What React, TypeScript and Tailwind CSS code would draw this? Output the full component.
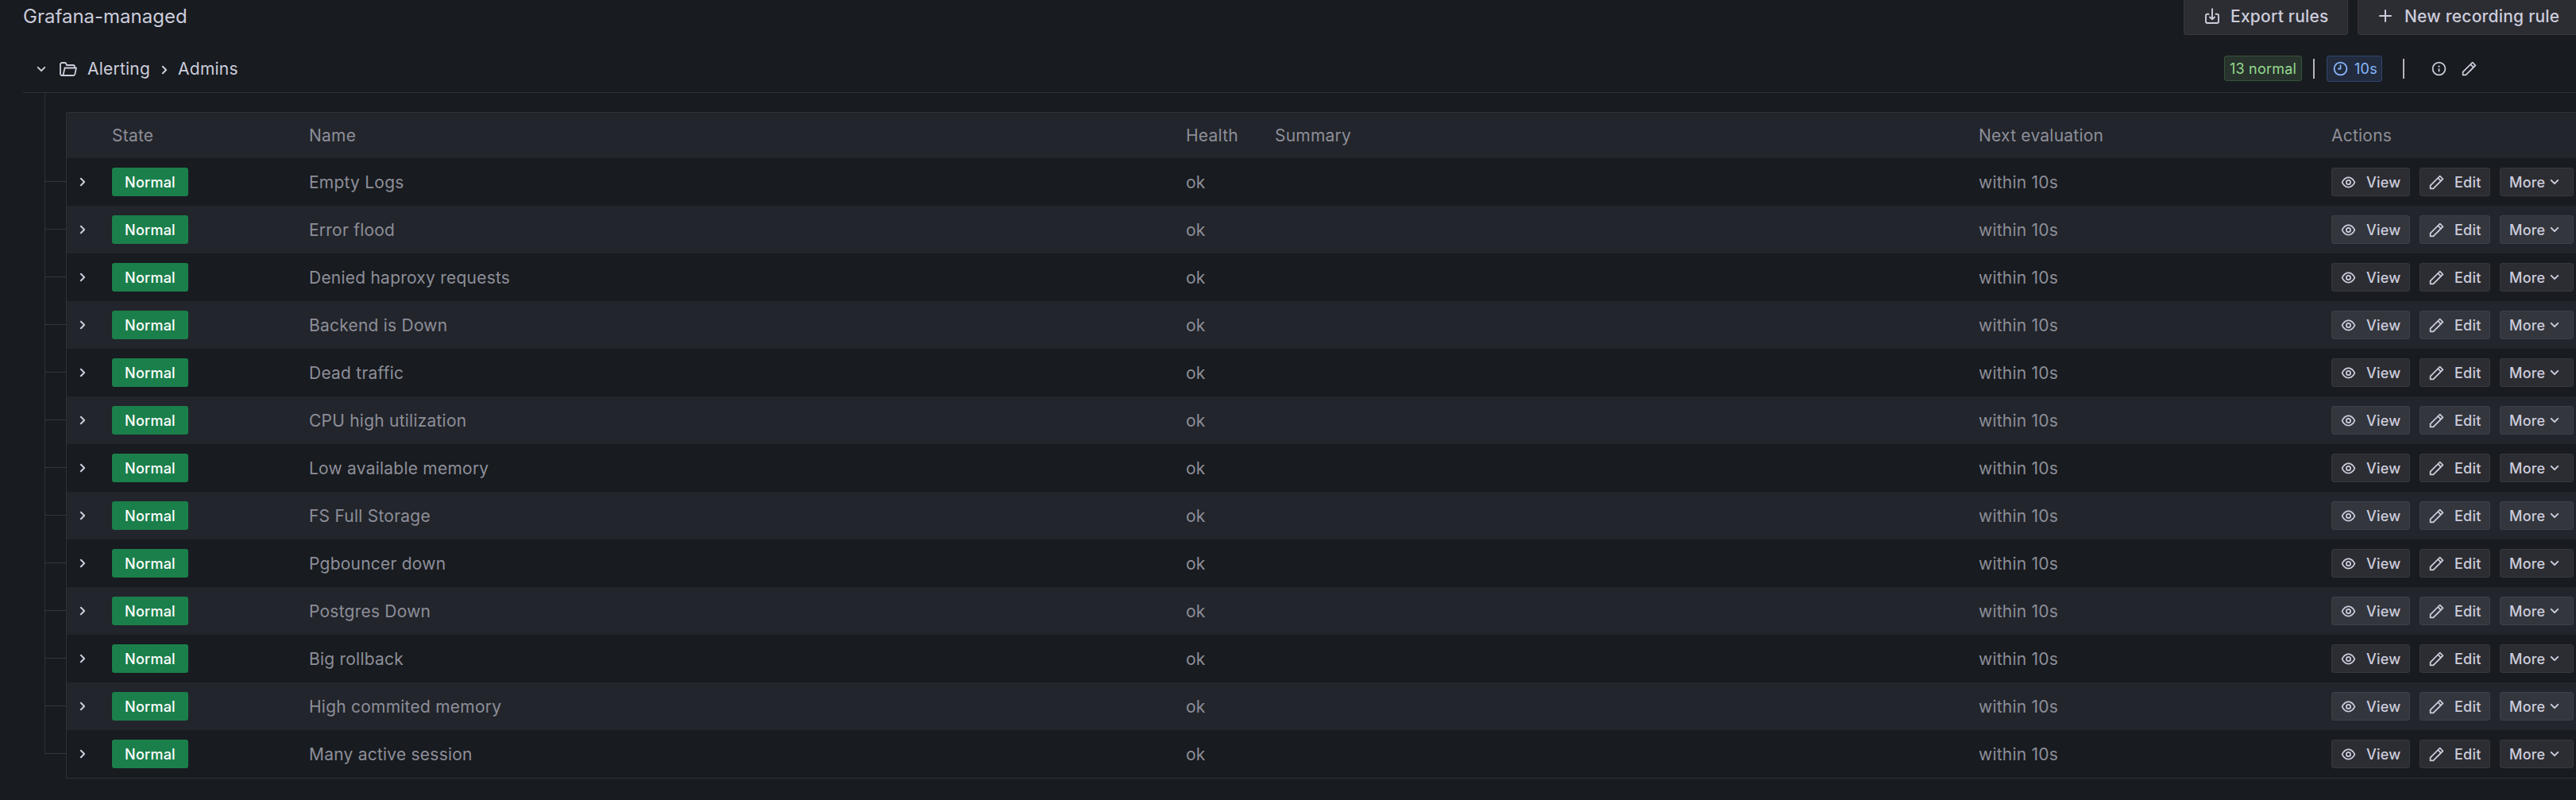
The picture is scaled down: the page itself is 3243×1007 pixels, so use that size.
import React from 'react';

const paths = {
  eye: 'M21.92,11.6C19.9,6.91,16.1,4,12,4S4.1,6.91,2.08,11.6a1,1,0,0,0,0,.8C4.1,17.09,7.9,20,12,20s7.9-2.91,9.92-7.6A1,1,0,0,0,21.92,11.6ZM12,18c-3.17,0-6.17-2.29-7.9-6C5.83,8.29,8.83,6,12,6s6.17,2.29,7.9,6C18.17,15.71,15.17,18,12,18ZM12,8a4,4,0,1,0,4,4A4,4,0,0,0,12,8Zm0,6a2,2,0,1,1,2-2A2,2,0,0,1,12,14Z',
  pen: 'M22,7.24a1,1,0,0,0-.29-.71L17.47,2.29A1,1,0,0,0,16.76,2a1,1,0,0,0-.71.29L13.22,5.12h0L2.29,16.05a1,1,0,0,0-.29.71V21a1,1,0,0,0,1,1H7.24A1,1,0,0,0,8,21.71L18.87,10.78h0L21.71,8a1.19,1.19,0,0,0,.22-.33,1,1,0,0,0,0-.24.7.7,0,0,0,0-.14ZM6.83,20H4V17.17l9.93-9.93,2.83,2.83ZM18.17,8.66,15.34,5.83l1.42-1.41,2.82,2.82Z',
  down: 'M17,9.17a1,1,0,0,0-1.41,0L12,12.71,8.46,9.17a1,1,0,0,0-1.41,0,1,1,0,0,0,0,1.42l4.24,4.24a1,1,0,0,0,1.42,0L17,10.59A1,1,0,0,0,17,9.17Z',
  right: 'M14.83,11.29,10.59,7.05a1,1,0,0,0-1.42,0,1,1,0,0,0,0,1.41L12.71,12,9.17,15.54a1,1,0,0,0,0,1.41,1,1,0,0,0,.71.29,1,1,0,0,0,.71-.29l4.24-4.24A1,1,0,0,0,14.83,11.29Z',
  plus: 'M19,11H13V5a1,1,0,0,0-2,0v6H5a1,1,0,0,0,0,2h6v6a1,1,0,0,0,2,0V13h6a1,1,0,0,0,0-2Z',
  info: 'M12,2A10,10,0,1,0,22,12,10,10,0,0,0,12,2Zm0,18a8,8,0,1,1,8-8A8,8,0,0,1,12,20Zm0-8.5a1,1,0,0,0-1,1v3a1,1,0,0,0,2,0v-3A1,1,0,0,0,12,11.5Zm0-4a1.25,1.25,0,1,0,1.25,1.25A1.25,1.25,0,0,0,12,7.5Z',
  clock: 'M12,2A10,10,0,1,0,22,12,10,10,0,0,0,12,2Zm0,18a8,8,0,1,1,8-8A8,8,0,0,1,12,20Zm0-14a1,1,0,0,0-1,1v4H9a1,1,0,0,0,0,2h3a1,1,0,0,0,1-1V7A1,1,0,0,0,12,6Z',
};

function Icon({ name, className }: { name: keyof typeof paths; className: string }) {
  return (
    <svg viewBox="0 0 24 24" fill="currentColor" className={`shrink-0 ${className}`}>
      <path d={paths[name]} />
    </svg>
  );
}

function FolderOpen() {
  return (
    <svg viewBox="0 0 24 24" fill="none" stroke="currentColor" strokeWidth="1.8" strokeLinejoin="round" strokeLinecap="round" className="h-6 w-6 shrink-0">
      <path d="M4 20a2 2 0 0 1-2-2V6a2 2 0 0 1 2-2h3.800a1.600 1.600 0 0 1 1.500 1.100L9.900 7H18a2 2 0 0 1 2 2v1" />
      <path d="M4 20a2 2 0 0 0 1.800-1.600L7.500 10.500H22l-1.700 7.900A2 2 0 0 1 18.400 20z" />
    </svg>
  );
}

function ExportIcon() {
  return (
    <svg viewBox="0 0 24 24" fill="none" stroke="currentColor" strokeWidth="1.9" strokeLinejoin="round" strokeLinecap="round" className="h-6 w-6 shrink-0">
      <path d="M7.500 9.700H6a2 2 0 0 0-2 2V19a2 2 0 0 0 2 2h12a2 2 0 0 0 2-2v-7.300a2 2 0 0 0-2-2h-1.500M12 3.200v13M9 13.500l3 2.900 3-2.900" />
    </svg>
  );
}

const rules = [
  'Empty Logs', 'Error flood', 'Denied haproxy requests', 'Backend is Down', 'Dead traffic',
  'CPU high utilization', 'Low available memory', 'FS Full Storage', 'Pgbouncer down',
  'Postgres Down', 'Big rollback', 'High commited memory', 'Many active session',
];

const columns = 'grid grid-cols-[57px_248px_1104px_112px_886px_444px_320px]';

function Row({ name, index }: { name: string; index: number }) {
  const odd = index % 2 === 1;
  const button = `flex h-9 shrink-0 items-center rounded-[3px] border text-[18px] font-medium tracking-[0.225px] text-[#ccccdc] ${odd ? 'border-[#3d4047] bg-[#33363d]' : 'border-[#37383c] bg-[#2c2d32]'}`;
  return (
    <div className="flex">
      <div className="relative w-[27px] shrink-0">
        <div className="absolute top-[29px] left-0 h-px w-full bg-[#34363b]" />
      </div>
      <div className={`h-[60px] items-center border-l border-[#2e3136] text-[#8d8e99] ${columns} ${odd ? 'bg-[#22252b]' : 'bg-[#181b1f]'}`}>
        <Icon name="right" className="ml-2 h-6 w-6 text-[#ccccdc]" />
        <div className="flex h-9 w-24 items-center justify-center rounded-[3px] bg-[#1b7f4b] text-[18px] font-medium tracking-[0.225px] text-white">Normal</div>
        <div>{name}</div>
        <div>ok</div>
        <div />
        <div>within 10s</div>
        <div className="flex gap-3">
          <div className={`w-[99px] pl-[10px] ${button}`}>
            <Icon name="eye" className="mr-3 h-[21px] w-[21px]" />View
          </div>
          <div className={`w-[89px] pl-[10px] ${button}`}>
            <Icon name="pen" className="mr-3 h-[21px] w-[21px]" />Edit
          </div>
          <div className={`w-[93px] pl-[11px] ${button}`}>
            More<Icon name="down" className="h-6 w-6" />
          </div>
        </div>
      </div>
    </div>
  );
}

export default function App() {
  return (
    <div className="h-[1007px] w-[3243px] overflow-hidden bg-[#181b1f] font-['Inter',sans-serif] text-[21px] leading-[33px] tracking-[0.225px] text-[#ccccdc]">
      <div className="flex h-11 items-end justify-between pl-[29px]">
        <h1 className="mb-[7px] text-[24px] font-normal tracking-normal">Grafana-managed</h1>
        <div className="flex w-[494px] gap-3 font-medium">
          <div className="flex h-12 w-[207px] shrink-0 items-center gap-[11px] rounded-[3px] border border-[#37383c] bg-[#2c2d32] pl-[23px]">
            <ExportIcon />Export rules
          </div>
          <div className="flex h-12 w-[310px] shrink-0 items-center gap-3 rounded-[3px] border border-[#37383c] bg-[#2c2d32] pl-[22px]">
            <Icon name="plus" className="h-6 w-6" />New recording rule
          </div>
        </div>
      </div>
      <div className="ml-[29px] flex h-[73px] items-center justify-between border-b border-[#2e3136] pt-[13px] pl-[11px]">
        <div className="flex items-center">
          <Icon name="down" className="h-6 w-6" />
          <div className="ml-[10px] flex items-center gap-3"><FolderOpen />Alerting</div>
          <Icon name="right" className="mt-[3px] mr-[5px] ml-[6px] h-6 w-6" />
          Admins
        </div>
        <div className="flex w-[443px] items-center">
          <div className="mb-px flex h-8 w-[98px] items-center justify-center rounded-[3px] border border-[#35543a] bg-[#28332d] text-[18px] text-[#96d98d]">13 normal</div>
          <div className="ml-[14px] h-[25px] w-[2px] bg-[#b7b5bd]" />
          <div className="ml-[15px] flex h-[33px] w-[70px] items-center gap-[7px] rounded-[3px] border border-[#2e4570] bg-[#222c3e] pl-[6px] text-[18px] text-[#8ab8ff]">
            <Icon name="clock" className="h-[21px] w-[21px]" />10s
          </div>
          <div className="ml-[26px] h-[25px] w-[2px] bg-[#b7b5bd]" />
          <Icon name="info" className="ml-[33px] h-[21px] w-[21px]" />
          <Icon name="pen" className="ml-[17px] h-[21px] w-[21px]" />
        </div>
      </div>
      <div className="relative pl-14">
        <div className="absolute top-0 left-14 h-[831px] w-px bg-[#2e3136]" />
        <div className="h-6" />
        <div className="ml-[27px] w-[3200px] overflow-hidden rounded-tl-[3px] border-t border-l border-[#2e3136] bg-[#22252b]">
          <div className={`h-[57px] items-center text-[#8d8e99] ${columns}`}>
            <div /><div>State</div><div>Name</div><div>Health</div><div>Summary</div><div>Next evaluation</div><div>Actions</div>
          </div>
        </div>
        {rules.map((name, i) => <Row key={name} name={name} index={i} />)}
        <div className="ml-[27px] h-px w-[3200px] bg-[#2e3136]" />
      </div>
    </div>
  );
}
